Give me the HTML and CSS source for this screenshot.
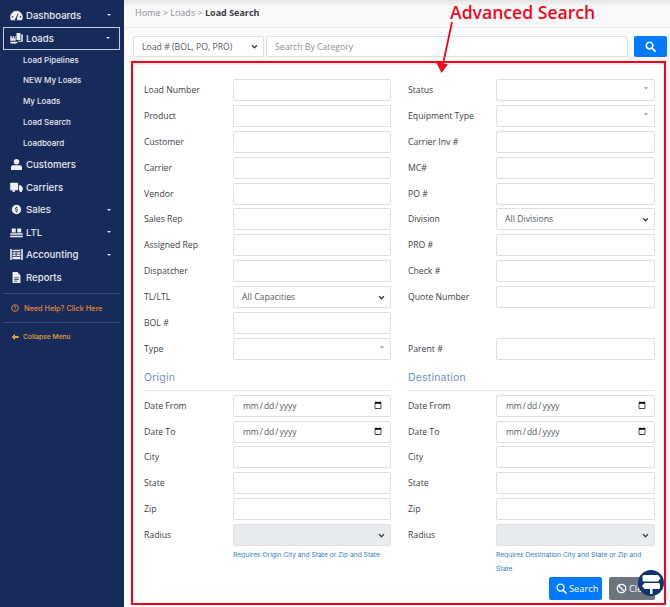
FILE: index.html
```html
<!DOCTYPE html>
<html lang="en">
<head>
    <meta charset="UTF-8">
    <title>Load Search</title>
    <link rel="stylesheet" href="styles.css">
</head>
<body>
    <div class="app">
        <aside class="sidebar">
            <ul class="menu">
                <li class="item"><svg class="icon" viewBox="0 0 16 14"><path d="M8 1a8 8 0 0 0-8 8c0 1.500.4 2.900 1 4h14c.6-1.100 1-2.500 1-4a8 8 0 0 0-8-8zM7 10.500l2.500-6 .9.4-2 6a1.400 1.400 0 1 1-1.400-.4zM3 9.500a1 1 0 1 1 0-2 1 1 0 0 1 0 2zm10 0a1 1 0 1 1 0-2 1 1 0 0 1 0 2z" fill-rule="evenodd"/></svg><span>Dashboards</span><i class="caret"></i></li>
                <li class="item active"><svg class="icon" viewBox="0 0 16 14"><path d="M8 0h5v9H8zM14 2h2v9h-6v-1h4zM0 4h2v3h1V4h2v3h1V4h1v6H0zM0 11h9v2H7a1 1 0 0 1-2 0H4a1 1 0 0 1-2 0H0z"/></svg><span>Loads</span><i class="caret"></i></li>
                <li class="sub">Load Pipelines</li>
                <li class="sub">NEW My Loads</li>
                <li class="sub">My Loads</li>
                <li class="sub">Load Search</li>
                <li class="sub">Loadboard</li>
                <li class="item"><svg class="icon" viewBox="0 0 16 14"><path d="M8 0a3.500 3.500 0 1 1 0 7 3.500 3.500 0 0 1 0-7zM3.500 8h9c1.400 0 2.500 1.100 2.500 2.500V14H1v-3.500C1 9.100 2.100 8 3.500 8z"/></svg><span>Customers</span></li>
                <li class="item"><svg class="icon" viewBox="0 0 16 14"><path d="M0 1h10v9.500H6a2 2 0 0 0-3.500 0H0zM11 4h2.500L16 7v3.500h-.8a2 2 0 0 0-3.400 0H11zM4.300 9.500a1.700 1.700 0 1 1 0 3.400 1.700 1.700 0 0 1 0-3.400zM13.500 9.500a1.700 1.700 0 1 1 0 3.400 1.700 1.700 0 0 1 0-3.400z"/></svg><span>Carriers</span></li>
                <li class="item"><svg class="icon" viewBox="0 0 16 14"><path d="M8 1a6 6 0 1 1 0 12A6 6 0 0 1 8 1zM7.500 3.500v1C6.500 4.700 6 5.300 6 6c0 1.800 3 1.200 3 2.200 0 .7-1.500.6-2.600.1v1.100c.3.100.7.200 1.100.3v.8h1v-.8c1-.2 1.500-.8 1.500-1.600 0-1.900-3-1.300-3-2.200 0-.6 1.100-.6 2.200-.2V4.600c-.3-.1-.7-.1-.7-.2v-.9z" fill-rule="evenodd"/></svg><span>Sales</span><i class="caret"></i></li>
                <li class="item"><svg class="icon" viewBox="0 0 16 14"><path d="M2 2h5v5H2zM9 2h5v5H9zM0 8h16v2H0zM0 11h16v2H0z"/></svg><span>LTL</span><i class="caret"></i></li>
                <li class="item"><svg class="icon" viewBox="0 0 16 14"><path d="M0 0h2v14H0zM14 0h2v14h-2zM3 1h10v2H3zM3 4h4v2H3zM8 4h5v2H8zM3 7h4v2H3zM8 7h5v2H8zM3 10h10v3H3z"/></svg><span>Accounting</span><i class="caret"></i></li>
                <li class="item"><svg class="icon" viewBox="0 0 16 14"><path d="M3 0h6l4 4v10H3zM5 7v1h6V7zM5 9v1h6V9zM5 11v1h4v-1z" fill-rule="evenodd"/></svg><span>Reports</span></li>
            </ul>
            <div class="help"><svg class="mini" viewBox="0 0 10 10"><circle cx="5" cy="5" r="4.200" fill="none" stroke="#e8833a" stroke-width="1.200"/><path d="M3.600 4c.1-1.900 3-1.800 3 0 0 1-1.200 1-1.200 2h-.8c0-1.400 1.200-1.300 1.200-2 0-.8-1.300-.8-1.400 0zM4.600 6.600h.8v.8h-.8z" fill="#e8833a"/></svg>Need Help? Click Here</div>
            <div class="collapse"><svg class="mini" viewBox="0 0 10 10"><path d="M5 1 1 5l4 4V6.300h4.500V3.700H5z" fill="#e8a33a"/></svg>Collapse Menu</div>
        </aside>
        <main class="content">
            <div class="topbar">Home &gt; Loads &gt; <b>Load Search</b></div>
            <div class="searchbar">
                <select class="category"><option>Load # (BOL, PO, PRO)</option></select>
                <input class="query" type="text" placeholder="Search By Category">
                <button class="go"><svg class="search-icon" viewBox="0 0 12 12"><circle cx="5" cy="5" r="3.600" fill="none" stroke="#fff" stroke-width="1.800"/><path d="m7.700 7.700 3.200 3.200" stroke="#fff" stroke-width="2" stroke-linecap="round"/></svg></button>
            </div>
            <section class="panel">
                <div class="form-grid">
                    <div class="row"><label>Load Number</label><input type="text"></div>
                    <div class="row"><label>Status</label><div class="combo"></div></div>
                    <div class="row"><label>Product</label><input type="text"></div>
                    <div class="row"><label>Equipment Type</label><div class="combo"></div></div>
                    <div class="row"><label>Customer</label><input type="text"></div>
                    <div class="row"><label>Carrier Inv #</label><input type="text"></div>
                    <div class="row"><label>Carrier</label><input type="text"></div>
                    <div class="row"><label>MC#</label><input type="text"></div>
                    <div class="row"><label>Vendor</label><input type="text"></div>
                    <div class="row"><label>PO #</label><input type="text"></div>
                    <div class="row"><label>Sales Rep</label><input type="text"></div>
                    <div class="row"><label>Division</label><select><option>All Divisions</option></select></div>
                    <div class="row"><label>Assigned Rep</label><input type="text"></div>
                    <div class="row"><label>PRO #</label><input type="text"></div>
                    <div class="row"><label>Dispatcher</label><input type="text"></div>
                    <div class="row"><label>Check #</label><input type="text"></div>
                    <div class="row"><label>TL/LTL</label><select><option>All Capacities</option></select></div>
                    <div class="row"><label>Quote Number</label><input type="text"></div>
                    <div class="row"><label>BOL #</label><input type="text"></div>
                    <div class="row"></div>
                    <div class="row"><label>Type</label><div class="combo"></div></div>
                    <div class="row"><label>Parent #</label><input type="text"></div>

                    <h3 class="heading">Origin</h3>
                    <h3 class="heading">Destination</h3>

                    <div class="row"><label>Date From</label><input type="date"></div>
                    <div class="row"><label>Date From</label><input type="date"></div>
                    <div class="row"><label>Date To</label><input type="date"></div>
                    <div class="row"><label>Date To</label><input type="date"></div>
                    <div class="row"><label>City</label><input type="text"></div>
                    <div class="row"><label>City</label><input type="text"></div>
                    <div class="row"><label>State</label><input type="text"></div>
                    <div class="row"><label>State</label><input type="text"></div>
                    <div class="row"><label>Zip</label><input type="text"></div>
                    <div class="row"><label>Zip</label><input type="text"></div>
                    <div class="row"><label>Radius</label><select disabled></select></div>
                    <div class="row"><label>Radius</label><select disabled></select></div>
                    <p class="hint">Requires Origin City and State or Zip and State</p>
                    <p class="hint hint-right">Requires Destination City and State or Zip and State</p>
                </div>
                <div class="actions">
                    <button class="btn primary"><svg class="btn-icon" viewBox="0 0 12 12"><circle cx="5" cy="5" r="3.800" fill="none" stroke="#fff" stroke-width="1.500"/><path d="m7.800 7.800 3.200 3.200" stroke="#fff" stroke-width="1.700" stroke-linecap="round"/></svg>Search</button>
                    <button class="btn muted"><svg class="btn-icon" viewBox="0 0 12 12"><circle cx="6" cy="6" r="4.600" fill="none" stroke="#fff" stroke-width="1.400"/><path d="m2.800 2.800 6.400 6.400" stroke="#fff" stroke-width="1.400"/></svg>Clear</button>
                </div>
            </section>
        </main>
    </div>

    <div class="callout">Advanced Search</div>
    <svg class="arrow" viewBox="0 0 20 55"><path d="M18 2 9 44" stroke="#f0061d" stroke-width="1.800" fill="none"/><path d="M2 42 14 44.500 7.500 53z" fill="#f0061d"/></svg>
    <div class="fab"><svg viewBox="0 0 26 26"><path d="M6 5h14l2.500 3.200L20 11.500H6a1.500 1.500 0 0 1-1.500-1.500V6.500A1.500 1.500 0 0 1 6 5z" fill="#fff"/><path d="M6.500 13h14a1.500 1.500 0 0 1 1.500 1.500v3a1.500 1.500 0 0 1-1.500 1.500h-14L4 16z" fill="#fff"/><path d="M12 19h2.500v5H12z" fill="#fff"/></svg></div>
</body>
</html>
```

FILE: styles.css
```css
* {
    box-sizing: border-box;
}
html, body {
    height: 100%;
}
body {
    margin: 0;
    overflow: hidden;
    font-family: "Open Sans", sans-serif;
    font-size: 9.5px;
    color: #3d4148;
    background-color: #fbfbfb;
}
.app {
    display: flex;
    height: 607px;
}

/* sidebar */
.sidebar {
    width: 124px;
    flex-shrink: 0;
    background-color: #172b5b;
    color: #e6e9f2;
    font-family: Inter, sans-serif;
    padding: 4px 3px 0;
}
.menu {
    list-style-type: none;
    margin: 0;
    padding: 0;
}
.item {
    display: flex;
    align-items: center;
    height: 22.500px;
    padding-left: 7px;
    padding-right: 10px;
    font-size: 9.600px;
    font-weight: 500;
}
.item.active {
    height: 23px;
    border: 1px solid #c6cde6;
    padding-left: 6px;
    padding-right: 9px;
    width: 117px;
}
.icon {
    width: 13px;
    height: 11px;
    margin-right: 3px;
    fill: #eef0f7;
    flex-shrink: 0;
}
.caret {
    margin-left: auto;
    border-top: 2.500px solid #e6e9f2;
    border-left: 2.500px solid transparent;
    border-right: 2.500px solid transparent;
}
.sub {
    height: 20.800px;
    line-height: 20.800px;
    padding-left: 20px;
    font-size: 8px;
    font-weight: 500;
}
.help, .collapse {
    display: flex;
    align-items: center;
    font-weight: 500;
    border-top: 1px solid #3a4a75;
}
.help {
    margin-top: 5px;
    height: 29px;
    padding-left: 8px;
    font-size: 7.300px;
    color: #e8833a;
}
.collapse {
    height: 29px;
    padding-left: 8px;
    font-size: 6.700px;
    color: #e8a33a;
}
.mini {
    width: 8px;
    height: 8px;
    margin-right: 5px;
}
.collapse .mini {
    margin-right: 4px;
}

/* main */
.content {
    flex: 1;
    min-width: 0;
}
.topbar {
    height: 28px;
    padding: 6px 11px 0;
    border-bottom: 1px solid #ececec;
    background: linear-gradient(#e4e4e4, #f9f9f9 7px);
    color: #8a8f96;
    font-size: 9px;
}
.topbar b {
    color: #3b4046;
}
.searchbar {
    display: flex;
    gap: 2px;
    height: 21px;
    margin: 8px 3px 4px 9px;
}
.category {
    width: 131px;
}
.query {
    width: 362px;
}
.go {
    width: 33px;
    margin-left: 4px;
    border: none;
    border-radius: 2px;
    background-color: #007bff;
    padding: 0;
}
.search-icon {
    width: 11px;
    height: 11px;
    display: block;
    margin: 0 auto;
}
input, select, .combo {
    height: 100%;
    border: 1px solid #dcdfe3;
    border-radius: 2px;
    background-color: #fff;
    font-family: "Open Sans", sans-serif;
    font-size: 8.700px;
    color: #555b62;
    padding: 0 8px;
    outline: none;
}
select {
    appearance: none;
    padding: 0 8px;
    background-image: url("data:image/svg+xml,%3Csvg xmlns='http://www.w3.org/2000/svg' viewBox='0 0 8 6'%3E%3Cpath d='M1 1.500 4 4.500 7 1.500' fill='none' stroke='%23343a40' stroke-width='1.500'/%3E%3C/svg%3E");
    background-repeat: no-repeat;
    background-position: right 5px center;
    background-size: 7px 5px;
}
input::placeholder {
    color: #8a8f96;
}
input[type="date"] {
    padding-right: 6px;
    font-size: 8.500px;
}
select:disabled {
    background-color: #e9ecef;
    opacity: 1;
}

/* red outlined panel */
.panel {
    height: 544px;
    margin: 0 4px 0 7px;
    border: 2px solid #f4001c;
    background-color: #fff;
    padding: 16px 9px 0 11px;
    box-shadow: inset 0 2px 0 #eeeeee;
}
.form-grid {
    display: grid;
    grid-template-columns: 247px 247px;
    column-gap: 17px;
    row-gap: 3.900px;
}
.row {
    display: grid;
    grid-template-columns: 89px 158px;
    align-items: center;
    height: 22px;
}
.row:nth-child(even) {
    grid-template-columns: 88px 159px;
}
label {
    font-size: 8.700px;
}
.row input, .row select, .row .combo {
    width: 100%;
}
.combo {
    position: relative;
}
.combo::after {
    content: "";
    position: absolute;
    top: 7px;
    right: 6px;
    border-top: 3px solid #a9adb2;
    border-left: 2px solid transparent;
    border-right: 2px solid transparent;
}
.heading {
    margin: 7.500px 0 0;
    height: 19.500px;
    border-bottom: 1px solid #e5e7ea;
    font-family: Inter, sans-serif;
    font-size: 10.500px;
    font-weight: 400;
    letter-spacing: 0.200px;
    color: #6f8fc9;
}
.hint {
    margin: -2px 0 0 89px;
    font-family: Inter, sans-serif;
    font-size: 6.700px;
    line-height: 14px;
    color: #2f80c8;
}
.hint-right {
    margin-left: 88px;
}
.actions {
    display: flex;
    justify-content: flex-end;
    gap: 7px;
    margin-top: 1px;
}
.btn {
    display: flex;
    align-items: center;
    height: 23px;
    border: none;
    border-radius: 2px;
    color: #fff;
    font-family: "Open Sans", sans-serif;
    font-size: 9.300px;
    padding: 0 7px;
}
.btn-icon {
    width: 11px;
    height: 11px;
    margin-right: 2px;
    flex-shrink: 0;
}
.primary {
    width: 53px;
    background-color: #007bff;
}
.muted {
    width: 46px;
    background-color: #6c757d;
}

/* annotation and floating widget */
.callout {
    position: absolute;
    left: 450px;
    top: 0;
    font-size: 17.600px;
    font-weight: 600;
    color: #f0061d;
}
.arrow {
    position: absolute;
    left: 434px;
    top: 20px;
    width: 20px;
    height: 55px;
}
.fab {
    position: absolute;
    left: 638px;
    top: 570px;
    width: 26px;
    height: 26px;
    border-radius: 50%;
    background-color: #0f356f;
}
.fab svg {
    display: block;
    width: 26px;
    height: 26px;
}
```
